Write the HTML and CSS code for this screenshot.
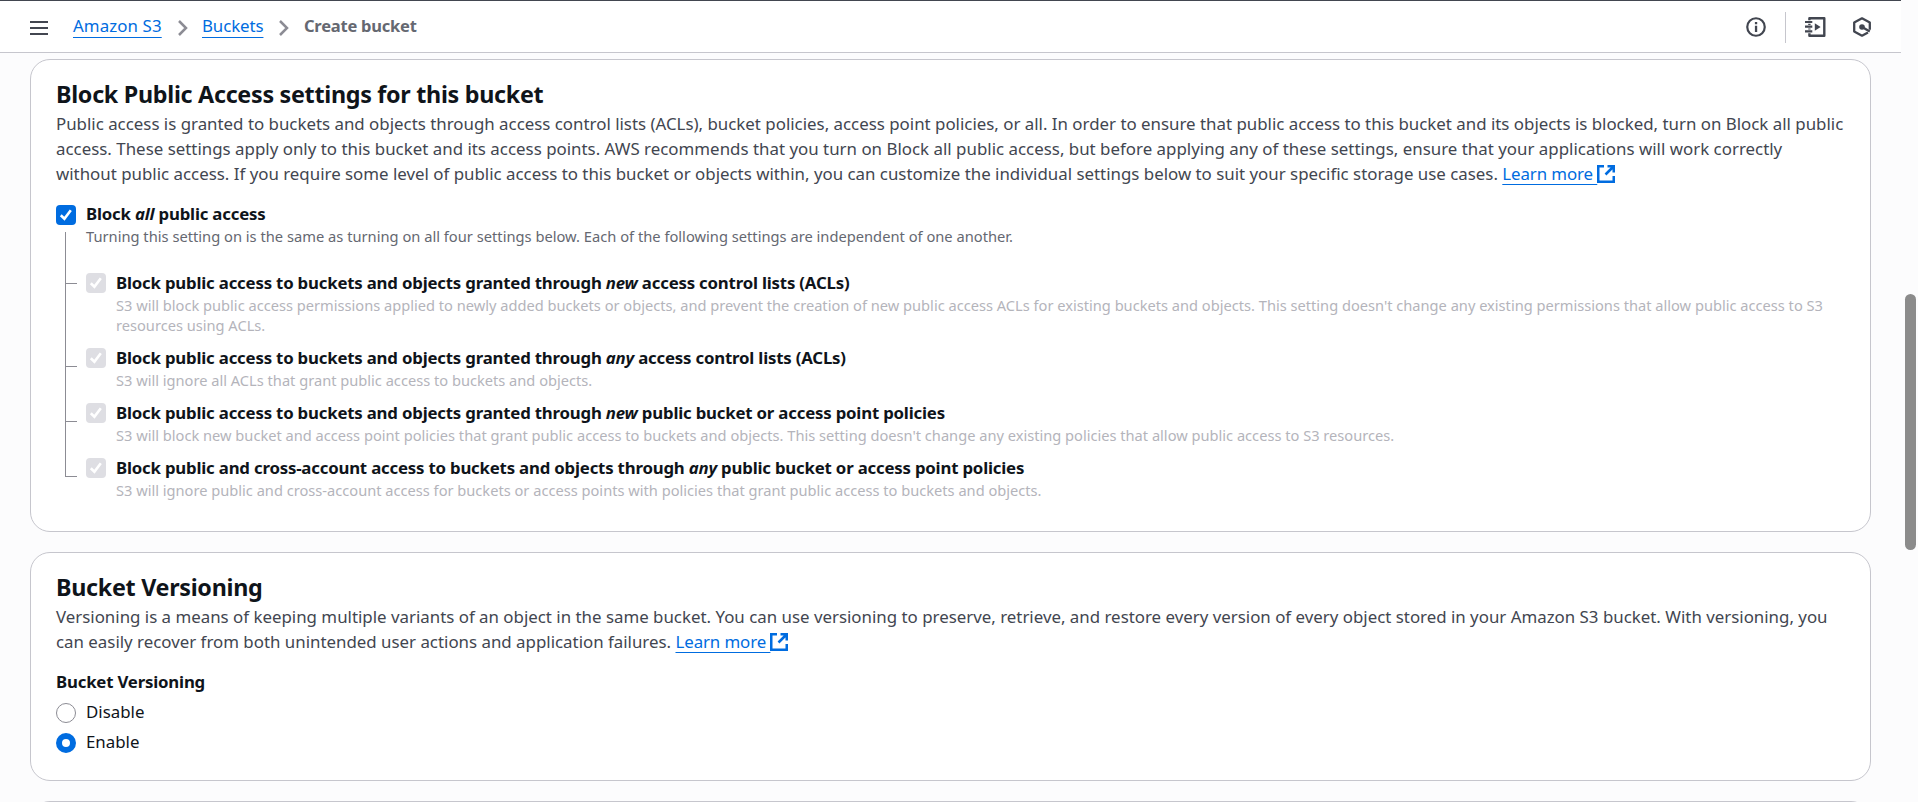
FILE: index.html
```html
<!DOCTYPE html>
<html lang="en">
<head>
<meta charset="utf-8">
<title>Create bucket</title>
<link rel="stylesheet" href="styles.css">
</head>
<body>
<svg class="defs" width="0" height="0">
  <symbol id="check" viewBox="0 0 20 20"><path d="M4.8 10.3 8.4 13.7 14.8 5.2" fill="none" stroke="#fff" stroke-width="2.6"/></symbol>
  <symbol id="chevron" viewBox="0 0 12 18"><path d="M2 2 9 9 2 16" fill="none" stroke="#8c8c94" stroke-width="2.5"/></symbol>
  <symbol id="external" viewBox="0 0 18 18"><path d="M7 1.25H1.25V16.75H16.75V11M10.5 1.25H16.75V7.5M16.5 1.5 8.5 9.5" fill="none" stroke="currentColor" stroke-width="2.5"/></symbol>
</svg>
<header class="topbar">
  <svg class="menu" viewBox="0 0 18 16" width="18" height="16"><path d="M0 2H18M0 8H18M0 14H18" stroke="#424650" stroke-width="2"/></svg>
  <nav class="crumbs">
    <a class="link crumb-s3" href="#">Amazon S3</a>
    <svg class="chev" width="12" height="18"><use href="#chevron"/></svg>
    <a class="link crumb-buckets" href="#">Buckets</a>
    <svg class="chev" width="12" height="18"><use href="#chevron"/></svg>
    <span class="current">Create bucket</span>
  </nav>
  <div class="tools">
    <svg width="20" height="20" viewBox="0 0 20 20"><circle cx="10" cy="10" r="8.75" fill="none" stroke="#424650" stroke-width="2.2"/><path d="M8.9 5H11.2V7.2H8.9ZM8.9 8.7H11.2V15H8.9Z" fill="#424650"/></svg>
    <span class="divider"></span>
    <svg width="21" height="20" viewBox="0 0 21 20"><path d="M4.4 1.3H19.3V18.7H4.4Z" fill="none" stroke="#424650" stroke-width="2.4" stroke-linejoin="round"/><path d="M0.5 5H7.5M0.5 9.7H7.5M0.5 14.4H7.5" stroke="#fff" stroke-width="3.6"/><path d="M0 5H7.3M0 9.7H7.3M0 14.4H7.3" stroke="#424650" stroke-width="2.2"/><path d="M9.8 6.3 15.6 10 9.8 13.7Z" fill="#424650"/></svg>
    <svg width="18" height="20" viewBox="0 0 18 20"><path d="M16.8 12.8V5.6L9 1.3 1.2 5.6V14.4L9 18.7 15 15.4" fill="none" stroke="#424650" stroke-width="2.3" stroke-linejoin="round"/><circle cx="9" cy="10" r="2.8" fill="#424650"/><path d="M9.5 10.3 16.8 14.6" stroke="#424650" stroke-width="2.3"/></svg>
  </div>
</header>
<main class="content">
  <section class="card access">
    <h2>Block Public Access settings for this bucket</h2>
    <p class="intro">Public access is granted to buckets and objects through access control lists (ACLs), bucket policies, access point policies, or all. In order to ensure that public access to this bucket and its objects is blocked, turn on Block all public<br><span class="wide">access. These settings apply only to this bucket and its access points. AWS recommends that you turn on Block all public access, but before applying any of these settings, ensure that your applications will work correctly</span><br>without public access. If you require some level of public access to this bucket or objects within, you can customize the individual settings below to suit your specific storage use cases. <a class="link" href="#">Learn more </a><svg class="ext" width="18" height="18"><use href="#external"/></svg></p>
    <div class="option">
      <span class="box on"><svg width="20" height="20"><use href="#check"/></svg></span>
      <div class="text"><b>Block <i>all</i> public access</b><p class="hint">Turning this setting on is the same as turning on all four settings below. Each of the following settings are independent of one another.</p></div>
    </div>
    <ul class="tree">
      <li class="option first">
        <span class="box"><svg width="20" height="20"><use href="#check"/></svg></span>
        <div class="text"><b>Block public access to buckets and objects granted through <i>new</i> access control lists (ACLs)</b><p class="hint off">S3 will block public access permissions applied to newly added buckets or objects, and prevent the creation of new public access ACLs for existing buckets and objects. This setting doesn't change any existing permissions that allow public access to S3<br>resources using ACLs.</p></div>
      </li>
      <li class="option">
        <span class="box"><svg width="20" height="20"><use href="#check"/></svg></span>
        <div class="text"><b>Block public access to buckets and objects granted through <i>any</i> access control lists (ACLs)</b><p class="hint off">S3 will ignore all ACLs that grant public access to buckets and objects.</p></div>
      </li>
      <li class="option">
        <span class="box"><svg width="20" height="20"><use href="#check"/></svg></span>
        <div class="text"><b>Block public access to buckets and objects granted through <i>new</i> public bucket or access point policies</b><p class="hint off">S3 will block new bucket and access point policies that grant public access to buckets and objects. This setting doesn't change any existing policies that allow public access to S3 resources.</p></div>
      </li>
      <li class="option">
        <span class="box"><svg width="20" height="20"><use href="#check"/></svg></span>
        <div class="text"><b>Block public and cross-account access to buckets and objects through <i>any</i> public bucket or access point policies</b><p class="hint off">S3 will ignore public and cross-account access for buckets or access points with policies that grant public access to buckets and objects.</p></div>
      </li>
    </ul>
  </section>
  <section class="card versioning">
    <h2>Bucket Versioning</h2>
    <p class="intro">Versioning is a means of keeping multiple variants of an object in the same bucket. You can use versioning to preserve, retrieve, and restore every version of every object stored in your Amazon S3 bucket. With versioning, you<br>can easily recover from both unintended user actions and application failures. <a class="link" href="#">Learn more </a><svg class="ext" width="18" height="18"><use href="#external"/></svg></p>
    <b class="field">Bucket Versioning</b>
    <label class="radio"><span class="dot"></span>Disable</label>
    <label class="radio"><span class="dot on"></span>Enable</label>
  </section>
  <section class="card next"></section>
</main>
<div class="scrollbar"></div>
</body>
</html>
```
FILE: styles.css
```css
* { box-sizing: border-box; }
body {
  margin: 0;
  height: 802px;
  overflow: hidden;
  background: #fcfcfd;
  color: #0f141a;
  font: 16.87px/25px "Noto Sans", sans-serif;
  white-space: nowrap;
}
.defs { position: absolute; }
svg { flex: none; }
p, h2, ul { margin: 0; padding: 0; }
b { font-size: 16.8px; font-weight: 700; letter-spacing: -0.19px; }

.topbar {
  display: flex;
  align-items: center;
  width: 1901px;
  height: 53px;
  padding: 0 30px;
  background: #fff;
  border-top: 1px solid #424650;
  border-bottom: 1px solid #c6c6cd;
}
.menu { margin-top: 2px; }
.crumbs { display: flex; align-items: center; margin: -2px 0 0 25px; }
.link {
  color: #006ce0;
  text-decoration: underline;
  text-decoration-thickness: 1px;
  text-underline-offset: 4px;
  text-decoration-skip-ink: none;
  white-space: pre;
}
.crumbs .link { text-underline-offset: 5px; }
.crumb-s3 { width: 89px; letter-spacing: 0.1px; }
.crumb-buckets { width: 61px; letter-spacing: -0.1px; }
.chev { margin: 4px 13px 0 15px; }
.current { color: #656871; font-size: 16.5px; font-weight: 700; letter-spacing: -0.23px; margin-left: 1px; }
.tools { display: flex; align-items: center; margin: 1px 0 0 auto; }
.divider { width: 1px; height: 31px; margin: 0 19px; background: #c6c6cd; }
.tools svg:last-child { margin-left: 27px; }

.content {
  display: flex;
  flex-direction: column;
  gap: 20px;
  width: 1901px;
  height: 749px;
  padding: 6px 30px 0;
  overflow: hidden;
}
.card {
  flex: none;
  background: #fff;
  border: 1px solid #c6c6cd;
  border-radius: 20px;
  padding: 19px 25px 0;
}
.access { height: 473px; }
.versioning { height: 229px; }
.next { height: 60px; }
h2 { font-size: 23.3px; line-height: 30px; font-weight: 700; letter-spacing: -0.29px; }
.intro { color: #424650; padding-top: 2px; }
.wide { letter-spacing: 0.012px; }
.ext { color: #006ce0; vertical-align: -3px; }
.intro .link { letter-spacing: -0.1px; }

.option { display: flex; gap: 10px; }
.access > .option { margin-top: 15px; }
.text { display: flex; flex-direction: column; }
.box { flex: none; width: 20px; height: 20px; margin-top: 3px; border-radius: 4px; background: #dedee3; }
.box.on { background: #006ce0; margin-top: 4px; }
.box svg { display: block; }
.hint { font-size: 14.69px; line-height: 20px; color: #656871; }
.hint.off { font-size: 14.64px; color: #b4b4bb; }

.tree {
  position: relative;
  display: flex;
  flex-direction: column;
  gap: 10px;
  margin: 24px 0 0 30px;
  list-style: none;
}
.tree::before {
  content: "";
  position: absolute;
  left: -21px;
  top: -38px;
  width: 1px;
  height: 244px;
  background: #8c8c94;
}
.tree .option { position: relative; }
.tree .option::before {
  content: "";
  position: absolute;
  left: -21px;
  top: 21px;
  width: 12px;
  height: 1px;
  background: #8c8c94;
}
.tree .first::before { top: 13px; }

.field { display: block; margin-top: 15px; }
.radio { display: flex; align-items: center; gap: 10px; height: 25px; margin-top: 5px; }
.dot { width: 20px; height: 20px; margin-top: 2px; border: 1px solid #8c8c94; border-radius: 50%; }
.dot.on { border: 6px solid #006ce0; }

.scrollbar {
  position: absolute;
  left: 1905px;
  top: 294px;
  width: 11px;
  height: 256px;
  border-radius: 6px;
  background: #8b8b8b;
}
```
